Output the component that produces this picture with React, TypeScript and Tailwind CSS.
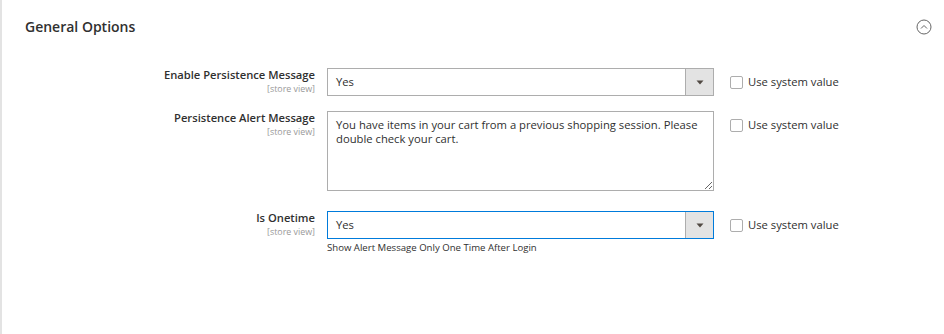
import React from "react";

function Caret() {
  return (
    <svg width="8" height="5" viewBox="0 0 8 5">
      <path d="M0.5 0.5h7L4 4.5z" fill="#514943" />
    </svg>
  );
}

function Select({ value, focused }: { value: string; focused?: boolean }) {
  return (
    <div
      className={`flex h-[28px] w-[387px] border bg-white ${
        focused ? "border-[#007bdb]" : "border-[#adadad]"
      }`}
    >
      <div className="flex flex-1 items-center pl-[8px] text-[11.25px] text-[#303030]">{value}</div>
      <div className="flex w-[28px] items-center justify-center border-l border-[#adadad] bg-[#e3e3e3]">
        <Caret />
      </div>
    </div>
  );
}

function SystemValue() {
  return (
    <label className="ml-[16px] flex h-[28px] items-center gap-[5px] self-start text-[11.25px] text-[#303030]">
      <span className="h-[13px] w-[13px] rounded-[2px] border border-[#adadad] bg-white" />
      Use system value
    </label>
  );
}

function Label({ text }: { text: string }) {
  return (
    <div className="w-[325px] shrink-0 pr-[12px] text-right">
      <div className="text-[11.2px] font-semibold leading-[14px] text-[#303030]">{text}</div>
      <div className="mt-[1px] text-[8.9px] leading-[12px] text-[#999]">[store view]</div>
    </div>
  );
}

export default function App() {
  return (
    <div
      className="h-[334px] w-[944px] border-l-2 border-[#e3e3e3] bg-white"
      style={{ fontFamily: '"Open Sans", sans-serif' }}
    >
      <div className="flex items-center justify-between pl-[23px] pr-[12px] pt-[17px]">
        <h2 className="text-[14px] font-semibold leading-[20px] text-[#303030]">General Options</h2>
        <svg width="16" height="16" viewBox="0 0 16 16">
          <circle cx="8" cy="8" r="7" fill="none" stroke="#666" strokeWidth="1" />
          <path d="M5 9.5L8 6.5L11 9.5" fill="none" stroke="#666" strokeWidth="1" />
        </svg>
      </div>

      <div className="mt-[31px] flex">
        <Label text="Enable Persistence Message" />
        <Select value="Yes" />
        <SystemValue />
      </div>

      <div className="mt-[15px] flex">
        <Label text="Persistence Alert Message" />
        <textarea
          readOnly
          className="h-[80px] w-[387px] shrink-0 resize border border-[#adadad] px-[8px] pt-[6px] text-[11.25px] leading-[14px] text-[#303030] outline-none"
          defaultValue="You have items in your cart from a previous shopping session. Please double check your cart."
        />
        <SystemValue />
      </div>

      <div className="mt-[20px] flex">
        <Label text="Is Onetime" />
        <div>
          <Select value="Yes" focused />
          <div className="mt-[3px] text-[9.6px] leading-[12px] text-[#303030]">
            Show Alert Message Only One Time After Login
          </div>
        </div>
        <SystemValue />
      </div>
    </div>
  );
}
